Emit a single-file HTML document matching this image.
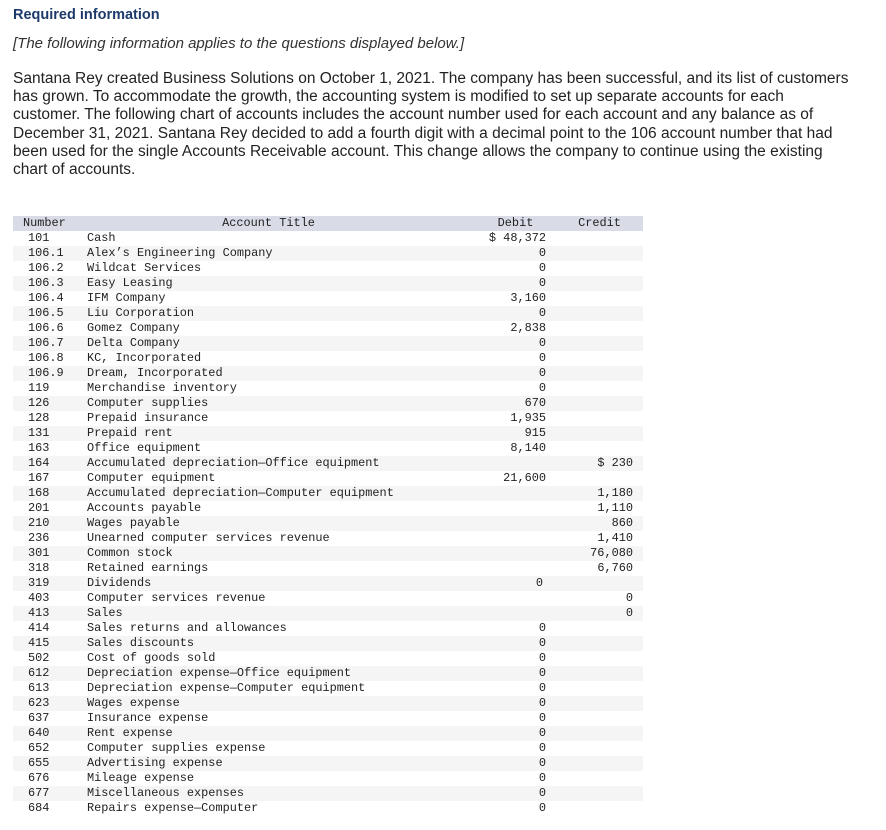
<!DOCTYPE html>
<html><head><meta charset="utf-8"><style>
body{margin:0;background:#fff;width:886px;height:830px;overflow:hidden;font-family:"Liberation Sans",sans-serif;color:#222}
.h{position:absolute;left:13px;top:7px;font-weight:bold;font-size:14.5px;color:#1d3a6b}
.i{position:absolute;left:13px;top:35px;font-style:italic;font-size:15px;color:#333}
.p{position:absolute;left:13px;top:70px;width:852px;font-size:15.5px;line-height:18.2px;color:#222}
table{position:absolute;left:13px;top:216px;border-collapse:collapse;font-family:"Liberation Mono",monospace;font-size:11.9px;color:#222;table-layout:fixed;width:630px}
td{height:15px;padding:0;line-height:15px;white-space:nowrap;overflow:visible}
tr.hd td{background:#d9dce6}
tr:nth-child(odd):not(.hd) td{background:#f5f5f5}
td.n{padding-left:15px}
td.d{text-align:right;padding-right:10px}
td.c{text-align:right;padding-right:10px}
</style></head><body>
<div class="h">Required information</div>
<div class="i">[The following information applies to the questions displayed below.]</div>
<div class="p">Santana Rey created Business Solutions on October 1, 2021. The company has been successful, and its list of customers has grown. To accommodate the growth, the accounting system is modified to set up separate accounts for each<br>customer. The following chart of accounts includes the account number used for each account and any balance as of December 31, 2021. Santana Rey decided to add a fourth digit with a decimal point to the 106 account number that had been used for the single Accounts Receivable account. This change allows the company to continue using the existing<br>chart of accounts.</div>
<table>
<colgroup><col style="width:74px"><col style="width:373px"><col style="width:96px"><col style="width:87px"></colgroup>
<tr class="hd"><td style="padding-left:10px">Number</td><td style="text-align:center;padding-right:10px">Account Title</td><td style="text-align:center;padding-left:15px">Debit</td><td style="text-align:center">Credit</td></tr>
<tr><td class="n">101</td><td>Cash</td><td class="d">$ 48,372</td><td class="c"></td></tr>
<tr><td class="n">106.1</td><td>Alex’s Engineering Company</td><td class="d">0</td><td class="c"></td></tr>
<tr><td class="n">106.2</td><td>Wildcat Services</td><td class="d">0</td><td class="c"></td></tr>
<tr><td class="n">106.3</td><td>Easy Leasing</td><td class="d">0</td><td class="c"></td></tr>
<tr><td class="n">106.4</td><td>IFM Company</td><td class="d">3,160</td><td class="c"></td></tr>
<tr><td class="n">106.5</td><td>Liu Corporation</td><td class="d">0</td><td class="c"></td></tr>
<tr><td class="n">106.6</td><td>Gomez Company</td><td class="d">2,838</td><td class="c"></td></tr>
<tr><td class="n">106.7</td><td>Delta Company</td><td class="d">0</td><td class="c"></td></tr>
<tr><td class="n">106.8</td><td>KC, Incorporated</td><td class="d">0</td><td class="c"></td></tr>
<tr><td class="n">106.9</td><td>Dream, Incorporated</td><td class="d">0</td><td class="c"></td></tr>
<tr><td class="n">119</td><td>Merchandise inventory</td><td class="d">0</td><td class="c"></td></tr>
<tr><td class="n">126</td><td>Computer supplies</td><td class="d">670</td><td class="c"></td></tr>
<tr><td class="n">128</td><td>Prepaid insurance</td><td class="d">1,935</td><td class="c"></td></tr>
<tr><td class="n">131</td><td>Prepaid rent</td><td class="d">915</td><td class="c"></td></tr>
<tr><td class="n">163</td><td>Office equipment</td><td class="d">8,140</td><td class="c"></td></tr>
<tr><td class="n">164</td><td>Accumulated depreciation—Office equipment</td><td class="d"></td><td class="c">$ 230</td></tr>
<tr><td class="n">167</td><td>Computer equipment</td><td class="d">21,600</td><td class="c"></td></tr>
<tr><td class="n">168</td><td>Accumulated depreciation—Computer equipment</td><td class="d"></td><td class="c">1,180</td></tr>
<tr><td class="n">201</td><td>Accounts payable</td><td class="d"></td><td class="c">1,110</td></tr>
<tr><td class="n">210</td><td>Wages payable</td><td class="d"></td><td class="c">860</td></tr>
<tr><td class="n">236</td><td>Unearned computer services revenue</td><td class="d"></td><td class="c">1,410</td></tr>
<tr><td class="n">301</td><td>Common stock</td><td class="d"></td><td class="c">76,080</td></tr>
<tr><td class="n">318</td><td>Retained earnings</td><td class="d"></td><td class="c">6,760</td></tr>
<tr><td class="n">319</td><td>Dividends</td><td class="d" style="padding-right:13px">0</td><td class="c"></td></tr>
<tr><td class="n">403</td><td>Computer services revenue</td><td class="d"></td><td class="c">0</td></tr>
<tr><td class="n">413</td><td>Sales</td><td class="d"></td><td class="c">0</td></tr>
<tr><td class="n">414</td><td>Sales returns and allowances</td><td class="d">0</td><td class="c"></td></tr>
<tr><td class="n">415</td><td>Sales discounts</td><td class="d">0</td><td class="c"></td></tr>
<tr><td class="n">502</td><td>Cost of goods sold</td><td class="d">0</td><td class="c"></td></tr>
<tr><td class="n">612</td><td>Depreciation expense—Office equipment</td><td class="d">0</td><td class="c"></td></tr>
<tr><td class="n">613</td><td>Depreciation expense—Computer equipment</td><td class="d">0</td><td class="c"></td></tr>
<tr><td class="n">623</td><td>Wages expense</td><td class="d">0</td><td class="c"></td></tr>
<tr><td class="n">637</td><td>Insurance expense</td><td class="d">0</td><td class="c"></td></tr>
<tr><td class="n">640</td><td>Rent expense</td><td class="d">0</td><td class="c"></td></tr>
<tr><td class="n">652</td><td>Computer supplies expense</td><td class="d">0</td><td class="c"></td></tr>
<tr><td class="n">655</td><td>Advertising expense</td><td class="d">0</td><td class="c"></td></tr>
<tr><td class="n">676</td><td>Mileage expense</td><td class="d">0</td><td class="c"></td></tr>
<tr><td class="n">677</td><td>Miscellaneous expenses</td><td class="d">0</td><td class="c"></td></tr>
<tr><td class="n">684</td><td>Repairs expense—Computer</td><td class="d">0</td><td class="c"></td></tr>
</table>
</body></html>
